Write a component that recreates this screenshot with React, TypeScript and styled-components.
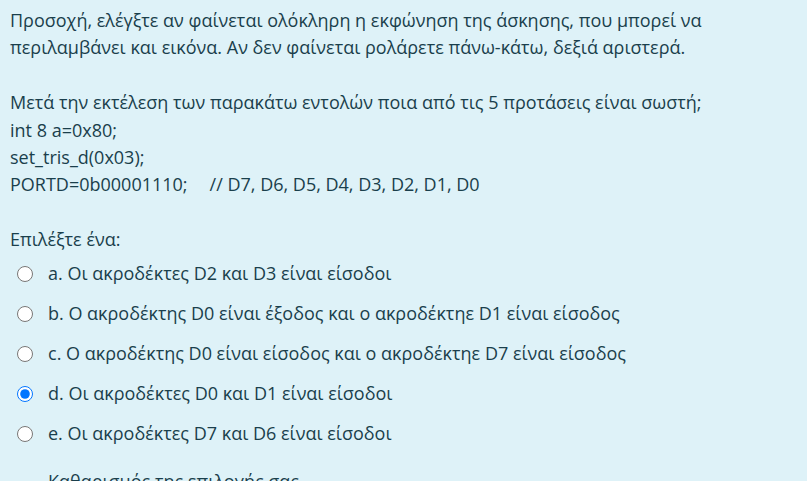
import React from 'react'
import styled, { createGlobalStyle } from 'styled-components'

const Global = createGlobalStyle`
  html, body {
    margin: 0;
    padding: 0;
    background: #def2f8;
  }
`

interface iOption {
  letter: string
  text: string
  checked?: boolean
}

const options: iOption[] = [
  { letter: 'a', text: 'Οι ακροδέκτες D2 και D3 είναι είσοδοι' },
  { letter: 'b', text: 'Ο ακροδέκτης D0 είναι έξοδος και ο ακροδέκτηε D1 είναι είσοδος' },
  { letter: 'c', text: 'Ο ακροδέκτης D0 είναι είσοδος και ο ακροδέκτηε D7 είναι είσοδος' },
  { letter: 'd', text: 'Οι ακροδέκτες D0 και D1 είναι είσοδοι', checked: true },
  { letter: 'e', text: 'Οι ακροδέκτες D7 και D6 είναι είσοδοι' },
]

const App: React.FC = () => {
  return (
    <>
      <Global />
      <Formulation>
        <Para>
          Προσοχή, ελέγξτε αν φαίνεται ολόκληρη η εκφώνηση της άσκησης, που μπορεί να
          <br />
          περιλαμβάνει και εικόνα. Αν δεν φαίνεται ρολάρετε πάνω-κάτω, δεξιά αριστερά.
        </Para>
        <Para>
          Μετά την εκτέλεση των παρακάτω εντολών ποια από τις 5 προτάσεις είναι σωστή;
          <br />
          int 8 a=0x80;
          <br />
          set_tris_d(0x03);
          <br />
          PORTD=0b00001110;<Tab />// D7, D6, D5, D4, D3, D2, D1, D0
        </Para>
        <Prompt>Επιλέξτε ένα:</Prompt>
        <Answers>
          {options.map((o) => (
            <Row key={o.letter}>
              <Radio type="radio" name="q1" defaultChecked={o.checked} />
              <Label>
                {o.letter}. {o.text}
              </Label>
            </Row>
          ))}
        </Answers>
        <Clear>Καθαρισμός της επιλογής σας</Clear>
      </Formulation>
    </>
  )
}

export default App

const Formulation = styled.div`
  min-height: 100vh;
  box-sizing: border-box;
  padding: 7px 10px 0 10px;
  background: #def2f8;
  color: #1a3f4c;
  font-family: 'Open Sans', 'Noto Sans', sans-serif;
  font-size: 18px;
  line-height: 27.4px;
  overflow: hidden;
`

const Para = styled.p`
  margin: 0 0 27.4px 0;
  white-space: nowrap;
`

const Tab = styled.span`
  display: inline-block;
  width: 22px;
`

const Prompt = styled.div`
  margin-top: 3px;
`

const Answers = styled.div`
  display: flex;
  flex-direction: column;
`

const Row = styled.label`
  display: flex;
  align-items: center;
  height: 40px;
  padding-left: 7px;
`

const Radio = styled.input`
  width: 16px;
  height: 16px;
  margin: 0 15px 0 0;
  accent-color: #0075ff;
`

const Label = styled.span`
  white-space: nowrap;
`

const Clear = styled.div`
  margin-top: 14px;
  padding-left: 38px;
`
